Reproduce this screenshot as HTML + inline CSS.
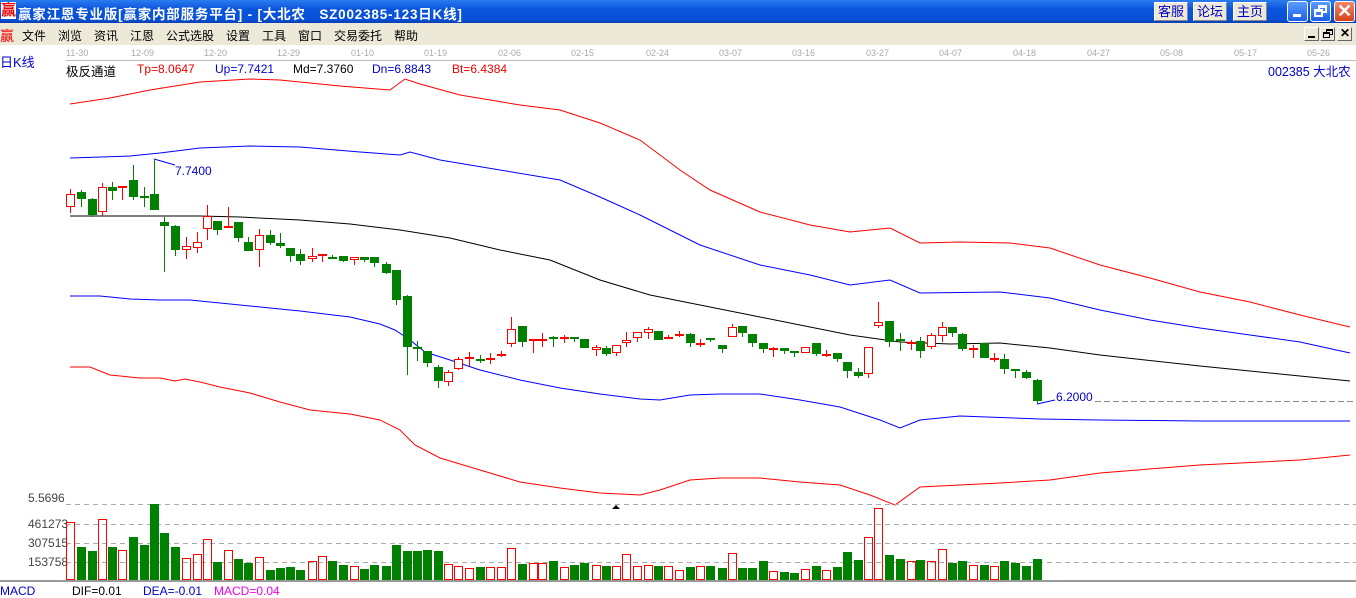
<!DOCTYPE html>
<html><head><meta charset="utf-8"><style>
*{margin:0;padding:0;box-sizing:border-box}
body{width:1356px;height:593px;overflow:hidden;background:#fff;font-family:"Liberation Sans","Noto Sans CJK SC",sans-serif;font-size:12px;position:relative}
.a{position:absolute;white-space:pre}
#title{position:absolute;left:0;top:0;width:1356px;height:23px;background:linear-gradient(#2a7cf0,#0a54dc 40%,#0850d8 85%,#0a3fb0)}
#menu{position:absolute;left:0;top:23px;width:1356px;height:22px;background:#ece9d8}
.tb{position:absolute;top:2px;height:19px;width:34px;background:#ece9d8;border:1px solid #fff;border-right-color:#888;border-bottom-color:#888;color:#0000c8;font-size:13px;text-align:center;line-height:17px}
.wb{position:absolute;top:1px;width:21px;height:21px;border:1px solid #fff;border-radius:3px;background:linear-gradient(#5b9cff,#1e5ee8)}
.mb{position:absolute;top:27px;width:15px;height:14px;background:#ece9d8;border:1px solid #fff;border-right-color:#666;border-bottom-color:#666}
</style></head><body>
<div id="title"></div>
<div class="a" style="left:1px;top:2px;color:#e00;font-size:15px;font-weight:bold;background:#fff;line-height:17px;height:17px">赢</div>
<div class="a" style="left:18px;top:3px;color:#fff;font-size:13.5px;font-weight:bold;letter-spacing:0.8px">赢家江恩专业版[赢家内部服务平台] - [大北农   SZ002385-123日K线]</div>
<div class="tb" style="left:1154px">客服</div>
<div class="tb" style="left:1193px">论坛</div>
<div class="tb" style="left:1233px">主页</div>
<div class="wb" style="left:1287px"><div style="position:absolute;left:5px;top:12px;width:8px;height:3px;background:#fff"></div></div>
<div class="wb" style="left:1310px"><div style="position:absolute;left:7px;top:3px;width:9px;height:8px;border:2px solid #fff;border-top-width:3px"></div><div style="position:absolute;left:3px;top:7px;width:9px;height:8px;border:2px solid #fff;border-top-width:3px;background:#3a7cf4"></div></div>
<div class="wb" style="left:1334px;background:linear-gradient(#f08a6a,#d8401c)"><div style="position:absolute;left:2px;top:-1px;color:#fff;font-size:18px;font-weight:bold">✕</div></div>
<div id="menu"></div>
<div class="a" style="left:0;top:26px;color:#e00;font-size:14px">赢</div>
<div class="a" style="left:22px;top:27px;font-size:12px;word-spacing:0">文件</div>
<div class="a" style="left:58px;top:27px">浏览</div>
<div class="a" style="left:94px;top:27px">资讯</div>
<div class="a" style="left:130px;top:27px">江恩</div>
<div class="a" style="left:166px;top:27px">公式选股</div>
<div class="a" style="left:226px;top:27px">设置</div>
<div class="a" style="left:262px;top:27px">工具</div>
<div class="a" style="left:298px;top:27px">窗口</div>
<div class="a" style="left:334px;top:27px">交易委托</div>
<div class="a" style="left:394px;top:27px">帮助</div>
<div class="mb" style="left:1304px"><div style="position:absolute;left:3px;top:8px;width:7px;height:2px;background:#000"></div></div>
<div class="mb" style="left:1320px"><div style="position:absolute;left:5px;top:1px;width:7px;height:6px;border:1px solid #000;border-top-width:2px"></div><div style="position:absolute;left:2px;top:4px;width:7px;height:6px;border:1px solid #000;border-top-width:2px;background:#ece9d8"></div></div>
<div class="mb" style="left:1337px"><div style="position:absolute;left:2px;top:-2px;font-size:12px;font-weight:bold">✕</div></div>

<div class="a" style="left:0;top:52px;color:#00c;font-size:13px">日K线</div>
<div class="a" style="left:66px;top:61px;font-size:12.5px">极反通道</div>
<div class="a" style="left:137px;top:62px;color:#e00">Tp=8.0647</div>
<div class="a" style="left:215px;top:62px;color:#00c">Up=7.7421</div>
<div class="a" style="left:293px;top:62px;color:#000">Md=7.3760</div>
<div class="a" style="left:372px;top:62px;color:#00c">Dn=6.8843</div>
<div class="a" style="left:452px;top:62px;color:#e00">Bt=6.4384</div>
<div class="a" style="left:1268px;top:61px;color:#00c;font-size:12.5px">002385 大北农</div>
<div class="a" style="left:175px;top:164px;color:#00c">7.7400</div>
<div class="a" style="left:1056px;top:390px;color:#00c">6.2000</div>
<div class="a" style="left:28px;top:491px;color:#444">5.5696</div>
<div class="a" style="left:28px;top:517px;color:#444">461273</div>
<div class="a" style="left:28px;top:536px;color:#444">307515</div>
<div class="a" style="left:28px;top:555px;color:#444">153758</div>
<div class="a" style="left:0;top:584px;color:#00c">MACD</div>
<div class="a" style="left:72px;top:584px;color:#000">DIF=0.01</div>
<div class="a" style="left:143px;top:584px;color:#00c">DEA=-0.01</div>
<div class="a" style="left:214px;top:584px;color:#e0e">MACD=0.04</div>

<svg id="s" width="1356" height="593" style="position:absolute;left:0;top:0" xmlns="http://www.w3.org/2000/svg">
<g font-family="Liberation Sans,sans-serif" font-size="9" fill="#aaa">
<text x="66" y="56">11-30</text><text x="131" y="56">12-09</text><text x="204" y="56">12-20</text><text x="277" y="56">12-29</text><text x="351" y="56">01-10</text><text x="424" y="56">01-19</text><text x="498" y="56">02-06</text><text x="571" y="56">02-15</text><text x="646" y="56">02-24</text><text x="719" y="56">03-07</text><text x="792" y="56">03-16</text><text x="866" y="56">03-27</text><text x="939" y="56">04-07</text><text x="1013" y="56">04-18</text><text x="1087" y="56">04-27</text><text x="1160" y="56">05-08</text><text x="1234" y="56">05-17</text><text x="1307" y="56">05-26</text>
</g>
<line x1="66" y1="60.5" x2="1356" y2="60.5" stroke="#bbb"/>
<g fill="none" stroke-width="1">
<polyline stroke="#f00" points="70,104 110,98 150,90 200,82 250,79 280,80 340,86 390,90 405,79 420,84 460,95 520,105 560,110 600,123 640,140 680,170 710,190 760,212 810,225 850,232 890,228 920,243 960,242 1010,243 1050,248 1100,265 1150,278 1200,292 1250,302 1300,315 1350,327"/>
<polyline stroke="#00f" points="70,158 130,156 160,153 200,148 250,146 300,147 360,152 400,155 410,152 440,160 500,170 560,180 600,197 640,215 700,245 760,265 810,275 850,285 890,280 920,293 1000,292 1050,298 1100,310 1150,320 1200,328 1250,335 1300,342 1350,353"/>
<polyline stroke="#000" points="70,216 200,216 240,217 300,220 350,224 400,230 450,238 500,250 550,260 600,280 650,295 700,305 750,315 800,325 850,335 900,342 950,344 1000,343 1050,348 1100,355 1200,366 1300,376 1350,381"/>
<polyline stroke="#00f" points="70,296 100,296 130,299 160,300 190,300 220,303 250,306 300,311 350,317 380,324 395,330 410,340 425,352 450,360 480,370 520,380 560,388 600,394 640,399 660,400 690,395 720,394 760,394 800,400 840,407 880,420 900,428 920,420 960,416 1040,419 1100,420 1200,421 1350,421"/>
<polyline stroke="#f00" points="70,367 90,367 110,375 140,378 160,378 175,381 185,379 200,382 220,387 250,393 280,402 310,410 350,414 380,420 400,430 415,445 440,458 480,470 520,482 560,488 600,493 640,495 660,490 690,480 720,478 760,478 800,482 840,485 870,495 895,505 920,487 960,485 1000,483 1050,480 1100,473 1200,465 1300,460 1350,455"/>
<polyline stroke="#00f" points="154,159 175,165"/>
<polyline stroke="#00f" points="1037,404 1055,400"/>
<line x1="1095" y1="401.5" x2="1356" y2="401.5" stroke="#888" stroke-dasharray="6,3"/>
<g stroke="#aaa" stroke-dasharray="5,4">
<line x1="66" y1="504.5" x2="1356" y2="504.5"/><line x1="66" y1="524.5" x2="1356" y2="524.5"/><line x1="66" y1="543.5" x2="1356" y2="543.5"/><line x1="66" y1="562.5" x2="1356" y2="562.5"/>
</g>
</g>
<polygon points="612,509 620,509 616,505" fill="#000"/>
<rect x="0" y="580" width="1356" height="2" fill="#999"/>
<g id="c"></g>
</svg>
<script>
var D=[
[70,194,207,189,213,'r'],[81,192,199,190,207,'g'],[92,199,215,198,217,'g'],[102,187,212,183,216,'r'],[112,187,191,182,200,'g'],[122,186,186,186,200,'r'],[133,180,197,165,200,'g'],[144,196,196,187,207,'g'],[154,194,210,159,210,'g'],[164,222,226,217,272,'g'],
[175,226,250,225,256,'g'],[186,246,250,237,259,'r'],[197,242,248,232,253,'r'],[207,216,229,205,240,'r'],[217,221,230,221,235,'g'],[228,226,226,207,226,'r'],[238,222,238,222,242,'g'],[248,242,251,237,251,'g'],[259,235,250,229,267,'r'],[270,235,243,230,245,'g'],
[280,243,246,233,248,'g'],[290,248,256,248,262,'g'],[300,254,261,249,265,'g'],[312,256,259,248,262,'r'],[322,254,254,254,262,'r'],[332,257,257,255,259,'g'],[343,256,261,256,262,'g'],[354,257,260,257,265,'r'],[364,257,260,257,262,'g'],[374,257,263,257,267,'g'],
[386,264,273,262,274,'g'],[396,270,300,270,305,'g'],[407,296,347,295,375,'g'],[417,347,349,341,361,'g'],[427,351,363,351,367,'g'],[438,367,381,365,388,'g'],[448,372,382,370,386,'r'],[458,359,369,357,370,'r'],[469,357,359,352,366,'r'],[480,359,359,355,363,'g'],
[490,358,358,353,364,'r'],[501,354,354,351,357,'r'],[511,329,344,317,347,'r'],[522,326,342,326,347,'g'],[533,339,339,339,353,'r'],[542,339,339,333,347,'r'],[553,337,339,336,347,'g'],[564,337,339,335,343,'r'],[574,337,339,337,342,'g'],[584,339,348,339,348,'g'],
[596,347,350,345,356,'r'],[606,348,354,346,356,'g'],[616,345,353,345,356,'r'],[626,340,343,332,347,'r'],[637,332,338,332,342,'r'],[648,329,333,327,339,'r'],[658,331,340,331,340,'g'],[668,337,339,335,339,'r'],[679,334,334,331,337,'r'],[690,334,343,333,347,'g'],
[700,343,343,339,347,'r'],[710,338,339,338,342,'g'],[722,345,349,345,353,'g'],[732,327,337,324,337,'r'],[742,326,333,326,337,'g'],[752,334,343,334,347,'g'],[763,343,349,343,353,'g'],[773,348,350,347,357,'r'],[784,348,351,348,354,'g'],[794,351,352,351,357,'g'],
[805,347,353,347,353,'r'],[816,343,354,343,356,'g'],[826,354,354,350,357,'r'],[837,353,359,353,362,'g'],[847,362,371,362,378,'g'],[858,372,376,368,378,'g'],[868,347,374,347,378,'r'],[878,322,326,302,328,'r'],[889,321,342,321,347,'g'],[900,339,339,333,351,'g'],
[911,342,342,340,350,'r'],[920,341,351,337,358,'g'],[931,335,347,333,349,'r'],[942,327,336,322,342,'r'],[952,327,333,327,337,'g'],[962,334,349,333,351,'g'],[973,348,349,345,358,'r'],[984,343,358,343,358,'g'],[994,358,358,353,362,'r'],[1004,359,369,354,374,'g'],
[1015,369,369,369,378,'g'],[1026,372,378,370,379,'g'],[1037,380,401,379,404,'g']];
var V=[522,547,551,519,547,550,537,545,504,533,547,558,554,539,562,550,559,563,557,570,568,567,570,561,556,561,565,566,569,565,566,545,551,551,550,551,564,566,568,567,567,567,548,564,563,563,561,567,565,563,565,566,566,554,566,565,566,566,570,567,566,566,568,553,568,568,561,571,572,573,569,566,570,567,552,560,537,508,555,559,561,560,561,549,563,561,565,565,566,561,563,566,559];
var h='';
D.forEach(function(d,i){var x=d[0],c=d[5]=='r'?'#f00':'#008000';
h+='<line x1="'+(x+.5)+'" y1="'+d[3]+'" x2="'+(x+.5)+'" y2="'+d[4]+'" stroke="'+c+'"/>';
var bh=d[2]-d[1];
if(bh<2){h+='<rect x="'+(x-4)+'" y="'+d[1]+'" width="9" height="2" fill="'+c+'"/>';}
else if(d[5]=='r'){h+='<rect x="'+(x-3.5)+'" y="'+(d[1]+.5)+'" width="8" height="'+(bh-1)+'" fill="#fff" stroke="#f00"/>';}
else{h+='<rect x="'+(x-4)+'" y="'+d[1]+'" width="9" height="'+bh+'" fill="#008000"/>';}
var v=V[i];
if(d[5]=='r'){h+='<rect x="'+(x-3.5)+'" y="'+(v+.5)+'" width="8" height="'+(580-v-1)+'" fill="none" stroke="#f00"/>';}
else{h+='<rect x="'+(x-4)+'" y="'+v+'" width="9" height="'+(580-v)+'" fill="#008000"/>';}
});
document.getElementById('c').innerHTML=h;
</script>
</body></html>
